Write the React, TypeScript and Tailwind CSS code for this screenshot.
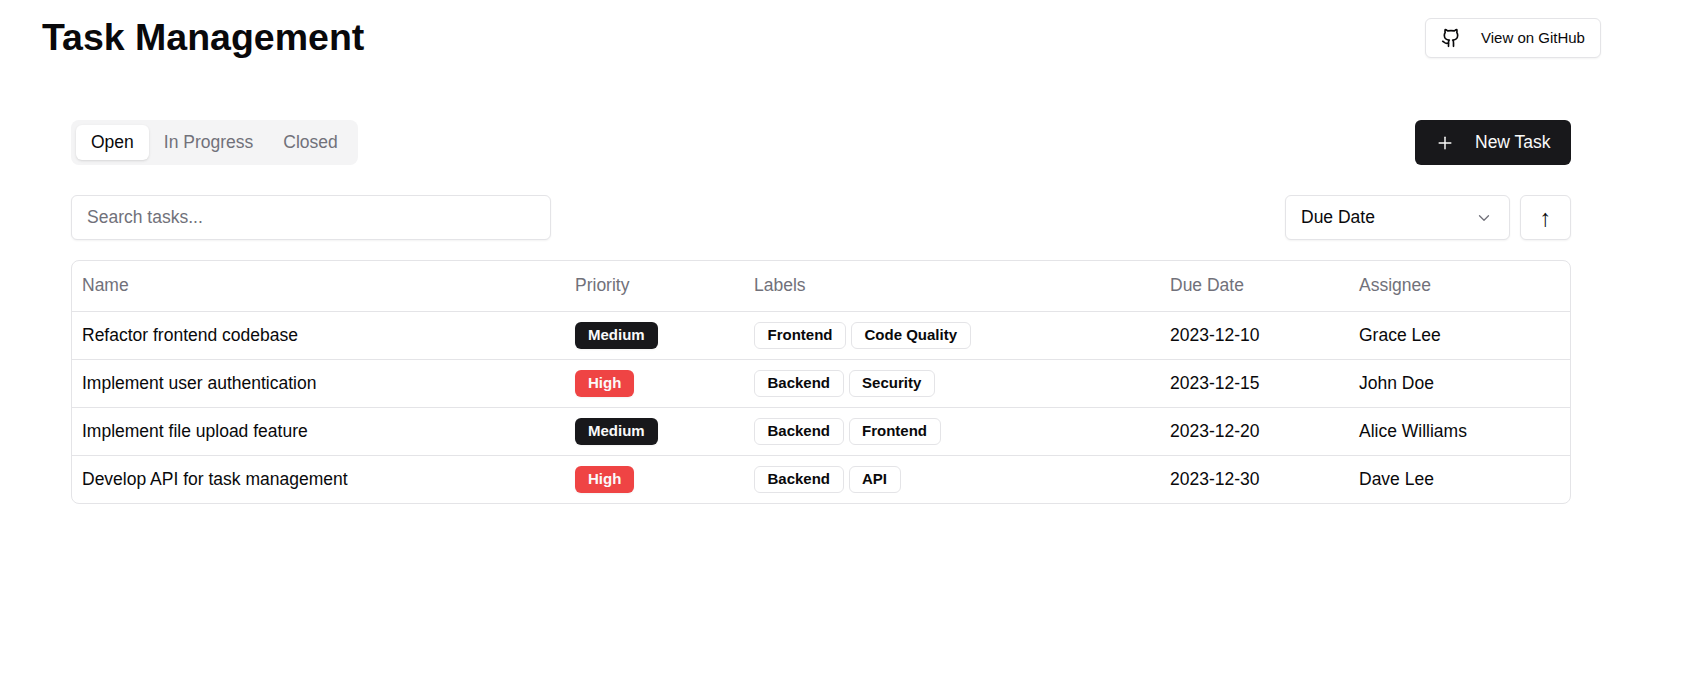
import { ChevronDown, Github, Plus } from 'lucide-react';

type Task = {
  name: string;
  priority: 'Medium' | 'High';
  labels: string[];
  due: string;
  assignee: string;
};

const TASKS: Task[] = [
  { name: 'Refactor frontend codebase', priority: 'Medium', labels: ['Frontend', 'Code Quality'], due: '2023-12-10', assignee: 'Grace Lee' },
  { name: 'Implement user authentication', priority: 'High', labels: ['Backend', 'Security'], due: '2023-12-15', assignee: 'John Doe' },
  { name: 'Implement file upload feature', priority: 'Medium', labels: ['Backend', 'Frontend'], due: '2023-12-20', assignee: 'Alice Williams' },
  { name: 'Develop API for task management', priority: 'High', labels: ['Backend', 'API'], due: '2023-12-30', assignee: 'Dave Lee' },
];

const PRIORITY_CLASS: Record<Task['priority'], string> = {
  Medium: 'bg-[#18181b]',
  High: 'bg-[#ef4444]',
};

const Th = ({ children, className }: { children: string; className: string }) => (
  <th className={`h-[50px] px-[10px] pb-[2px] text-left text-[17.5px] font-normal text-[#71717a] ${className}`}>{children}</th>
);

export default function App() {
  return (
    <div className="min-h-[682px] bg-white font-['Liberation_Sans',Arial,sans-serif] text-[17.5px] text-[#09090b]">
      <header className="ml-[42px] mr-[82px] flex h-[74px] items-center justify-between">
        <h1 className="text-[37.5px] font-bold text-[#09090b]">Task Management</h1>
        <button className="mt-[2px] flex h-[40px] w-[176px] items-center gap-[20px] rounded-md border border-[#e4e4e7] bg-white pl-[15px] text-[15px] shadow-xs">
          <Github className="h-5 w-5" strokeWidth={2} />
          View on GitHub
        </button>
      </header>

      <main className="ml-[71px] mt-[46px] w-[1500px]">
        <div className="flex items-center justify-between">
          <div className="flex h-[45px] items-center rounded-lg bg-[#f4f4f5] p-[5px]">
            <span className="flex h-[35px] items-center rounded-md bg-white px-[15px] shadow-sm">Open</span>
            <span className="flex h-[35px] items-center px-[15px] text-[#71717a]">In Progress</span>
            <span className="flex h-[35px] items-center px-[15px] text-[#71717a]">Closed</span>
          </div>
          <button className="flex h-[45px] w-[156px] items-center gap-[20px] rounded-md bg-[#18181b] pl-[20px] font-medium text-[#fafafa]">
            <Plus className="h-5 w-5" strokeWidth={1.75} />
            New Task
          </button>
        </div>

        <div className="mt-[30px] flex items-center justify-between">
          <div className="flex h-[45px] w-[480px] items-center rounded-md border border-[#e4e4e7] bg-white px-[15px] text-[#71717a] shadow-xs">
            Search tasks...
          </div>
          <div className="flex gap-[10px]">
            <div className="flex h-[45px] w-[225px] items-center justify-between rounded-md border border-[#e4e4e7] bg-white pl-[15px] pr-[16px] shadow-xs">
              Due Date
              <ChevronDown className="h-[18px] w-[18px] text-[#71717a]" strokeWidth={1.75} />
            </div>
            <button className="flex h-[45px] w-[51px] items-center justify-center rounded-md border border-[#e4e4e7] bg-white text-[24px] font-light shadow-xs">
              ↑
            </button>
          </div>
        </div>

        <div className="mt-[20px] overflow-hidden rounded-lg border border-[#e4e4e7]">
          <table className="w-full table-fixed border-collapse">
            <thead>
              <tr className="border-b border-[#e4e4e7]">
                <Th className="w-[493px]">Name</Th>
                <Th className="w-[179px]">Priority</Th>
                <Th className="w-[416px]">Labels</Th>
                <Th className="w-[189px]">Due Date</Th>
                <Th className="w-auto">Assignee</Th>
              </tr>
            </thead>
            <tbody>
              {TASKS.map((task, index) => (
                <tr key={task.name} className={index < TASKS.length - 1 ? 'border-b border-[#e4e4e7]' : ''}>
                  <td className="h-[48px] px-[10px]">{task.name}</td>
                  <td className="px-[10px]">
                    <span className={`inline-flex h-[27px] items-center rounded-md px-[13px] align-middle text-[15px] font-bold text-[#fafafa] shadow-xs ${PRIORITY_CLASS[task.priority]}`}>
                      {task.priority}
                    </span>
                  </td>
                  <td className="px-[10px]">
                    <div className="flex gap-[5px]">
                      {task.labels.map((label) => (
                        <span key={label} className="inline-flex h-[27px] items-center rounded-md border border-[#e4e4e7] px-[12.5px] text-[15px] font-bold">
                          {label}
                        </span>
                      ))}
                    </div>
                  </td>
                  <td className="px-[10px]">{task.due}</td>
                  <td className="px-[10px]">{task.assignee}</td>
                </tr>
              ))}
            </tbody>
          </table>
        </div>
      </main>
    </div>
  );
}
